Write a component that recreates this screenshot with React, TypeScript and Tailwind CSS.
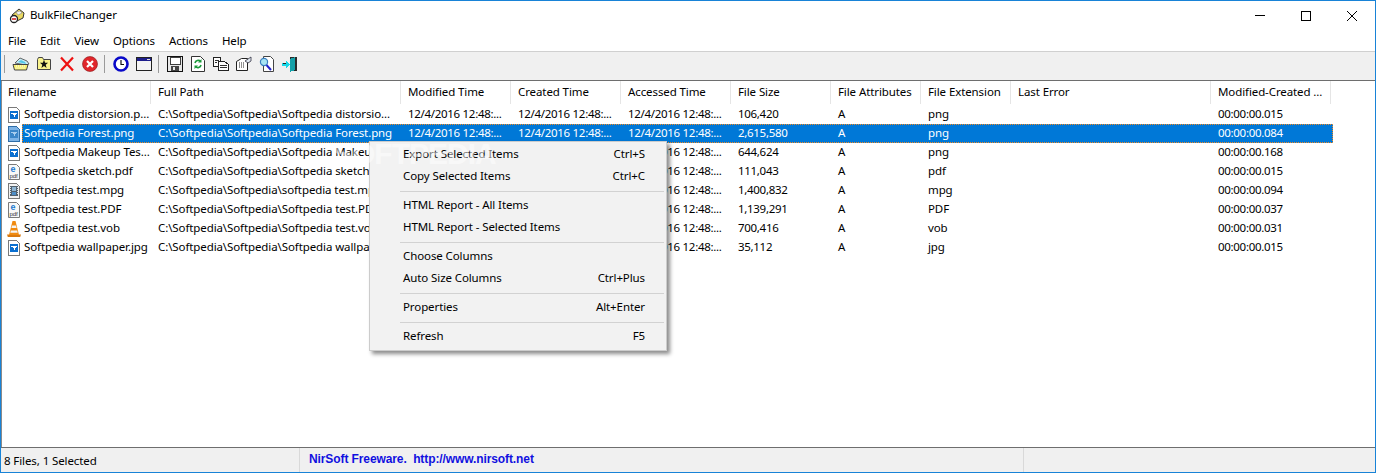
import React from "react";

const columns = [
  { name: "Filename", width: "w-[149px]" },
  { name: "Full Path", width: "w-[250px]" },
  { name: "Modified Time", width: "w-[110px]" },
  { name: "Created Time", width: "w-[110px]" },
  { name: "Accessed Time", width: "w-[110px]" },
  { name: "File Size", width: "w-[100px]" },
  { name: "File Attributes", width: "w-[90px]" },
  { name: "File Extension", width: "w-[90px]" },
  { name: "Last Error", width: "w-[200px]" },
  { name: "Modified-Created ...", width: "w-[120px]" },
];

const date = "12/4/2016 12:48:...";

const files = [
  { icon: "png", name: "Softpedia distorsion.p...", path: "C:\\Softpedia\\Softpedia\\Softpedia distorsio...", size: "106,420", ext: "png", diff: "00:00:00.015" },
  { icon: "png", name: "Softpedia Forest.png", path: "C:\\Softpedia\\Softpedia\\Softpedia Forest.png", size: "2,615,580", ext: "png", diff: "00:00:00.084", selected: true },
  { icon: "png", name: "Softpedia Makeup Tes...", path: "C:\\Softpedia\\Softpedia\\Softpedia Makeup Tes...", size: "644,624", ext: "png", diff: "00:00:00.168" },
  { icon: "pdf", name: "Softpedia sketch.pdf", path: "C:\\Softpedia\\Softpedia\\Softpedia sketch.pdf", size: "111,043", ext: "pdf", diff: "00:00:00.015" },
  { icon: "mpg", name: "softpedia test.mpg", path: "C:\\Softpedia\\Softpedia\\softpedia test.mpg", size: "1,400,832", ext: "mpg", diff: "00:00:00.094" },
  { icon: "pdf", name: "Softpedia test.PDF", path: "C:\\Softpedia\\Softpedia\\Softpedia test.PDF", size: "1,139,291", ext: "PDF", diff: "00:00:00.037" },
  { icon: "vob", name: "Softpedia test.vob", path: "C:\\Softpedia\\Softpedia\\Softpedia test.vob", size: "700,416", ext: "vob", diff: "00:00:00.031" },
  { icon: "png", name: "Softpedia wallpaper.jpg", path: "C:\\Softpedia\\Softpedia\\Softpedia wallpaper.jpg", size: "35,112", ext: "jpg", diff: "00:00:00.015" },
];

const menuGroups = [
  [["Export Selected Items", "Ctrl+S"], ["Copy Selected Items", "Ctrl+C"]],
  [["HTML Report - All Items", ""], ["HTML Report - Selected Items", ""]],
  [["Choose Columns", ""], ["Auto Size Columns", "Ctrl+Plus"]],
  [["Properties", "Alt+Enter"]],
  [["Refresh", "F5"]],
];

function FileIcon({ type, selected }: { type: string; selected?: boolean }) {
  if (type === "vob") {
    return (
      <svg width="16" height="16" viewBox="0 0 16 16">
        <path d="M1 13.500h14l-.8 2.500H1.800z" fill="#d9780e" />
        <path d="M6.500 0h3L13 14H3z" fill="#f08a10" />
        <path d="M6 4.500h4l.6 2.500H5.400zM4.800 9.500h6.400l.5 2.200H4.300z" fill="#f4f4f4" />
      </svg>
    );
  }
  if (type === "pdf") {
    return (
      <svg width="16" height="16" viewBox="0 0 16 16">
        <path d="M2.500.5h8l3 3v12h-11z" fill="#f8f8f8" stroke="#7a7a7a" />
        <text x="4.500" y="7.500" fontSize="9" fontWeight="700" fill="#1f78d0" fontFamily="Liberation Sans, sans-serif">e</text>
        <text x="3.500" y="13.500" fontSize="6" fill="#333" fontFamily="Liberation Sans, sans-serif">pdf</text>
      </svg>
    );
  }
  if (type === "mpg") {
    return (
      <svg width="16" height="16" viewBox="0 0 16 16" shapeRendering="crispEdges">
        <path d="M2.500.5h8l3 3v12h-11z" fill="#f2f2f2" stroke="#7a7a7a" />
        <rect x="4" y="3" width="8" height="10" fill="#52616e" />
        <rect x="6" y="4" width="4" height="4" fill="#8fb6d4" />
        <rect x="6" y="9" width="4" height="3" fill="#4f8fc8" />
        <path d="M4 4h1v1H4zM4 6h1v1H4zM4 8h1v1H4zM4 10h1v1H4zM11 4h1v1h-1zM11 6h1v1h-1zM11 8h1v1h-1zM11 10h1v1h-1z" fill="#dfe7ee" />
      </svg>
    );
  }
  return (
    <svg width="16" height="16" viewBox="0 0 16 16" shapeRendering="crispEdges">
      <path d="M2.500.5h8l3 3v12h-11z" fill={selected ? "#7fb4e6" : "#fff"} stroke={selected ? "#2f6ea8" : "#7a7a7a"} />
      <rect x="4" y="4" width="8" height="8" fill={selected ? "#3b86c8" : "#0a6fd0"} />
      <path d="M5 6h6v1h-1v1H9v2H8V8H7V7H5z" fill={selected ? "#a8cdee" : "#fff"} />
    </svg>
  );
}

function ToolIcon({ kind }: { kind: string }) {
  switch (kind) {
    case "open":
      return (
        <svg width="18" height="16" viewBox="0 0 18 16">
          <path d="M3 7l5-5 7 3 2 3-3 1z" fill="#c9ecf6" stroke="#444" strokeWidth=".8" />
          <path d="M6 6l3-2 4 2 1 2z" fill="#56c8e8" />
          <path d="M1 8.500h15l-1.500 5.500H2.500z" fill="#f8f070" stroke="#444" />
          <path d="M4 10h9M3.500 12h9" stroke="#fff" strokeDasharray="1 1" />
        </svg>
      );
    case "star":
      return (
        <svg width="16" height="16" viewBox="0 0 16 16">
          <path d="M1.500 3.500l1-2h4l1 2h7v10h-13z" fill="#f9f38c" stroke="#444" />
          <path d="M8 3.800l1.100 2.900h3L9.700 8.800l.9 3.100L8 10.100l-2.600 1.800.9-3.100-2.400-2.100h3z" fill="#111" />
        </svg>
      );
    case "x":
      return (
        <svg width="16" height="16" viewBox="0 0 16 16">
          <path d="M2 1.500l12 13M14 1.500L2 14.500" stroke="#ee1111" strokeWidth="2.200" />
        </svg>
      );
    case "stop":
      return (
        <svg width="16" height="16" viewBox="0 0 16 16">
          <circle cx="8" cy="8" r="7.500" fill="#e0262b" />
          <circle cx="8" cy="8" r="7.500" fill="none" stroke="#8a1518" strokeWidth=".6" />
          <path d="M5 5l6 6M11 5l-6 6" stroke="#fff" strokeWidth="2.200" />
        </svg>
      );
    case "clock":
      return (
        <svg width="16" height="16" viewBox="0 0 16 16">
          <circle cx="8" cy="8" r="6.500" fill="#fff" stroke="#0808c8" strokeWidth="2.600" />
          <path d="M8 4v4.500h3" fill="none" stroke="#111" strokeWidth="1.200" />
        </svg>
      );
    case "window":
      return (
        <svg width="16" height="14" viewBox="0 0 16 14" shapeRendering="crispEdges">
          <rect x=".5" y=".5" width="15" height="13" fill="#f4f4f4" stroke="#222" />
          <rect x="1" y="1" width="14" height="3" fill="#1e1e8c" />
          <rect x="11" y="2" width="3" height="1" fill="#ddd" />
        </svg>
      );
    case "save":
      return (
        <svg width="16" height="16" viewBox="0 0 16 16" shapeRendering="crispEdges">
          <path d="M.5.5h15v15H.5z" fill="#e8e8e8" stroke="#111" />
          <rect x="3" y="1" width="10" height="7" fill="#fff" stroke="#111" strokeWidth=".8" />
          <rect x="4" y="10" width="8" height="5" fill="#444" />
          <rect x="6" y="11" width="2" height="3" fill="#e8e8e8" />
        </svg>
      );
    case "refresh":
      return (
        <svg width="14" height="16" viewBox="0 0 14 16">
          <path d="M.5.5h9l4 4v11H.5z" fill="#fff" stroke="#333" />
          <path d="M4 7a3.200 3.200 0 0 1 5.500-1.500M10 9a3.200 3.200 0 0 1-5.500 1.500" fill="none" stroke="#1a9a3a" strokeWidth="1.600" />
          <path d="M10.500 3v3.500H7zM3.500 13V9.500H7z" fill="#1a9a3a" />
        </svg>
      );
    case "copy":
      return (
        <svg width="16" height="14" viewBox="0 0 16 14" shapeRendering="crispEdges">
          <path d="M.5.5h7v9h-7z" fill="#fff" stroke="#222" />
          <path d="M5.500 4.500h6l4 3v6h-10z" fill="#fff" stroke="#222" />
          <path d="M2 3h4v1H2zM2 5h2v1H2zM7 8h7v1H7zM7 10h7v1H7z" fill="#333" />
        </svg>
      );
    case "props":
      return (
        <svg width="16" height="16" viewBox="0 0 16 16">
          <path d="M.5 5.500l5-3h6v12h-11z" fill="#fff" stroke="#222" />
          <path d="M3 7h6M3 9h6M3 11h6" stroke="#222" strokeDasharray="1 1" />
          <path d="M9 5l6-4v4l-3 2z" fill="#dfe7ef" stroke="#334" strokeWidth=".8" />
        </svg>
      );
    case "find":
      return (
        <svg width="15" height="16" viewBox="0 0 15 16">
          <path d="M4.500.5h7l3 3v12h-10z" fill="#fff" stroke="#444" />
          <circle cx="5" cy="6" r="3.600" fill="#a8e4f4" stroke="#3a7fc0" strokeWidth="1.200" />
          <path d="M7.500 9l4.500 5" stroke="#2222cc" strokeWidth="2" />
        </svg>
      );
    default:
      return (
        <svg width="16" height="16" viewBox="0 0 16 16" shapeRendering="crispEdges">
          <rect x="8" y="1" width="7" height="14" fill="#2a2a2a" />
          <path d="M8 3l5-2v13l-5 2z" fill="#14a0a8" />
          <path d="M0 7h4V4l4 4.500L4 13v-3H0z" fill="#18d8e8" />
          <rect x="1" y="7" width="3" height="1" fill="#222" />
        </svg>
      );
  }
}

function ToolGroup({ items }: { items: string[] }) {
  return (
    <div className="flex">
      <div className="w-[8px] pl-[3px] pt-[2px]">
        <div className="h-[18px] w-px bg-[#9a9a9a]" />
      </div>
      {items.map((item) => (
        <div key={item} className="flex h-[21px] w-[23px] items-center justify-center">
          <ToolIcon kind={item} />
        </div>
      ))}
    </div>
  );
}

function Row({ file }: { file: (typeof files)[number] }) {
  const cells = [file.path, date, date, date, file.size, "A", file.ext, "", file.diff];
  // digits run wider in this font than in the original, so the numeric columns get tightened
  const numeric = [false, true, true, true, true, false, false, false, true];
  return (
    <div className="flex h-[19px] items-center">
      <div className="flex w-[20px] shrink-0 justify-end">
        <FileIcon type={file.icon} selected={file.selected} />
      </div>
      <div
        className={
          file.selected
            ? "flex h-[19px] items-center border border-dotted border-[#f08a24] bg-[#0078d7] pb-[2px] text-white"
            : "flex h-[19px] items-center border border-transparent pb-[2px]"
        }
      >
        <div className="w-[129px] overflow-hidden whitespace-nowrap pl-[1px]">{file.name}</div>
        {cells.map((cell, i) => (
          <div
            key={i}
            className={`${columns[i + 1].width} ${numeric[i] ? "tracking-[-0.3px]" : ""} overflow-hidden whitespace-nowrap pl-[6px]`}
          >
            {cell}
          </div>
        ))}
      </div>
    </div>
  );
}

function ContextMenu() {
  return (
    <div className="absolute left-[368px] top-[140px] w-[298px] border border-[#cccccc] bg-[#f2f2f2] py-[2px] shadow-[3px_3px_4px_rgba(0,0,0,0.45)]">
      {menuGroups.map((group, i) => (
        <div key={i}>
          {i > 0 && (
            <div className="flex h-[7px] items-center pl-[30px] pr-[2px]">
              <div className="h-px w-full bg-[#d2d2d2]" />
            </div>
          )}
          {group.map(([label, keys]) => (
            <div key={label} className="flex h-[22px] items-center justify-between pb-[2px] pl-[33px] pr-[21px]">
              <span>{label}</span>
              <span>{keys}</span>
            </div>
          ))}
        </div>
      ))}
    </div>
  );
}

export default function App() {
  return (
    <div className="relative flex h-[473px] w-[1376px] flex-col overflow-hidden border border-[#1883d7] bg-white font-['Noto_Sans',sans-serif] text-[11.5px] tracking-[-0.1px] text-black">
      {/* title bar */}
      <div className="flex h-[29px] shrink-0 items-center">
        <div className="flex w-[29px] justify-end pr-[5px]">
          <svg width="16" height="16" viewBox="0 0 16 16">
            <path d="M3 7l7-6 5 4-1 5-6 3z" fill="#e8d860" stroke="#333" />
            <path d="M7 4l4-1 2 2-4 2z" fill="#f4f4f4" stroke="#777" strokeWidth=".5" />
            <circle cx="5" cy="11" r="3.500" fill="#fff" stroke="#222" strokeWidth="1.300" />
            <path d="M3 11h4" stroke="#d01818" strokeWidth="1.500" />
          </svg>
        </div>
        <span className="pb-[2px]">BulkFileChanger</span>
        <div className="ml-auto flex">
          <div className="flex h-[29px] w-[46px] items-center justify-center">
            <div className="h-px w-[10px] bg-black" />
          </div>
          <div className="flex h-[29px] w-[46px] items-center justify-center">
            <div className="h-[10px] w-[10px] border border-black" />
          </div>
          <div className="flex h-[29px] w-[46px] items-center justify-center">
            <svg width="10" height="10" viewBox="0 0 10 10">
              <path d="M0 0l10 10M10 0L0 10" stroke="#000" />
            </svg>
          </div>
        </div>
      </div>

      {/* menu */}
      <div className="flex h-[21px] shrink-0 items-center gap-[14px] pl-[7px]">
        {["File", "Edit", "View", "Options", "Actions", "Help"].map((item) => (
          <span key={item}>{item}</span>
        ))}
      </div>

      {/* toolbar */}
      <div className="flex h-[30px] shrink-0 items-start border-y border-t-[#d0d0d0] border-b-[#6e6e6e] bg-[#f0f0f0] pt-[1px]">
        <ToolGroup items={["open", "star", "x", "stop"]} />
        <ToolGroup items={["clock", "window"]} />
        <ToolGroup items={["save", "refresh", "copy", "props", "find", "exit"]} />
      </div>

      {/* list */}
      <div className="min-h-0 flex-1 border-l border-[#8a8a8a]">
        <div className="mb-[1px] flex h-[23px] items-center">
          {columns.map((col, i) => (
            <div
              key={col.name}
              className={`${col.width} ${i === 0 ? "pl-[6px]" : "pl-[7px]"} flex h-[23px] items-center overflow-hidden whitespace-nowrap border-r border-[#e5e5e5] pb-[2px]`}
            >
              {col.name}
            </div>
          ))}
        </div>
        {files.map((file) => (
          <Row key={file.name} file={file} />
        ))}
      </div>

      {/* status bar */}
      <div className="flex h-[25px] shrink-0 border-t border-[#6e6e6e] bg-[#f0f0f0]">
        <div className="flex w-[299px] items-end border-r border-[#d9d9d9] pb-[3px] pl-[3px]">8 Files, 1 Selected</div>
        <div className="w-[724px] border-r border-[#d9d9d9] pl-[9px] pt-[2px] font-['Liberation_Sans',sans-serif] text-[12px] font-bold tracking-[-0.1px] text-[#1010e0]">
          NirSoft Freeware.&nbsp; http://www.nirsoft.net
        </div>
      </div>

      <ContextMenu />

      {/* softpedia watermark over the list */}
      <span className="pointer-events-none absolute left-[332px] top-[135px] font-['Liberation_Sans',sans-serif] text-[30px] font-bold leading-[36px] tracking-[-1px] text-white opacity-50">
        SOFTPEDIA
      </span>
    </div>
  );
}
